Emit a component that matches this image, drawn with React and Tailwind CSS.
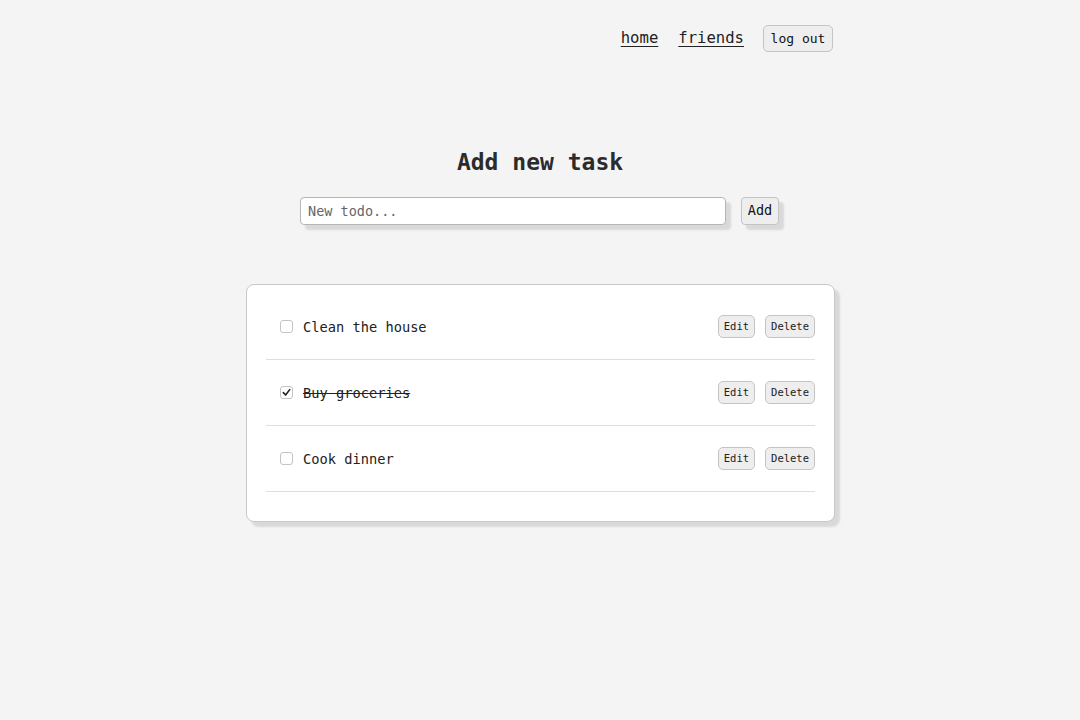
import React from "react";

const font = { fontFamily: '"DejaVu Sans Mono", "Liberation Mono", monospace' };

function Check({ checked }) {
  return (
    <span className="flex h-[13px] w-[13px] shrink-0 items-center justify-center rounded-[3px] border border-[#c4c4c4] bg-white">
      {checked && (
        <svg width="9" height="9" viewBox="0 0 10 10">
          <path d="M1.5 5.2 L4 7.8 L8.6 1.8" fill="none" stroke="#222" strokeWidth="1.8" strokeLinecap="round" strokeLinejoin="round" />
        </svg>
      )}
    </span>
  );
}

function Row({ text, done }) {
  return (
    <div className="flex h-[66px] items-center border-b border-[#dedede] pl-[14px]">
      <Check checked={done} />
      <span className={"ml-[10px] pt-[1px] text-[13.7px] text-[#222] " + (done ? "line-through" : "")}>{text}</span>
      <div className="ml-auto flex items-center gap-[10px]">
        <button className="h-[23px] rounded-[5px] border border-[#c4c4c4] bg-[#eeeeee] px-[5px] text-[10.5px] leading-none text-[#222]">Edit</button>
        <button className="h-[23px] rounded-[5px] border border-[#c4c4c4] bg-[#eeeeee] px-[5px] text-[10.5px] leading-none text-[#222]">Delete</button>
      </div>
    </div>
  );
}

export default function App() {
  return (
    <div className="min-h-screen bg-[#f4f4f4] text-[#222]" style={font}>
      <div className="flex justify-center pl-[1px]">
        <div className="w-[589px]">
          <nav className="flex items-center justify-end pr-[2px] pt-[25px]">
            <a href="#" className="text-[15.6px] underline underline-offset-[3px] text-[#222]">home</a>
            <a href="#" className="ml-[20px] text-[15.6px] underline underline-offset-[3px] text-[#222]">friends</a>
            <button className="ml-[19px] h-[27px] w-[70px] rounded-[5px] border border-[#c4c4c4] bg-[#eeeeee] text-[13px] font-medium leading-none text-[#111]">log out</button>
          </nav>
        </div>
      </div>

      <h1 className="mt-[94px] text-center text-[23px] font-bold leading-[32px] text-[#2b2b2b]">Add new task</h1>

      <div className="mt-[19px] flex justify-center gap-[15px] pr-[1px]">
        <input
          type="text"
          placeholder="New todo..."
          className="h-[28px] w-[426px] rounded-[4px] border border-[#b5b5b5] bg-white px-[7px] text-[13.5px] text-[#222] placeholder:text-[#666] shadow-[5px_5px_2px_#d9d9d9] outline-none"
        />
        <button className="h-[28px] w-[38px] rounded-[4px] border border-[#c4c4c4] bg-[#eeeeee] text-[13.5px] leading-none text-[#111] shadow-[5px_5px_2px_#d9d9d9]">Add</button>
      </div>

      <div className="mt-[59px] flex justify-center pl-[1px]">
        <div className="w-[589px] rounded-[8px] border border-[#c8c8c8] bg-white px-[19px] pb-[29px] pt-[9px] shadow-[5px_5px_2px_#d9d9d9]">
          <Row text="Clean the house" />
          <Row text="Buy groceries" done />
          <Row text="Cook dinner" />
        </div>
      </div>
    </div>
  );
}
